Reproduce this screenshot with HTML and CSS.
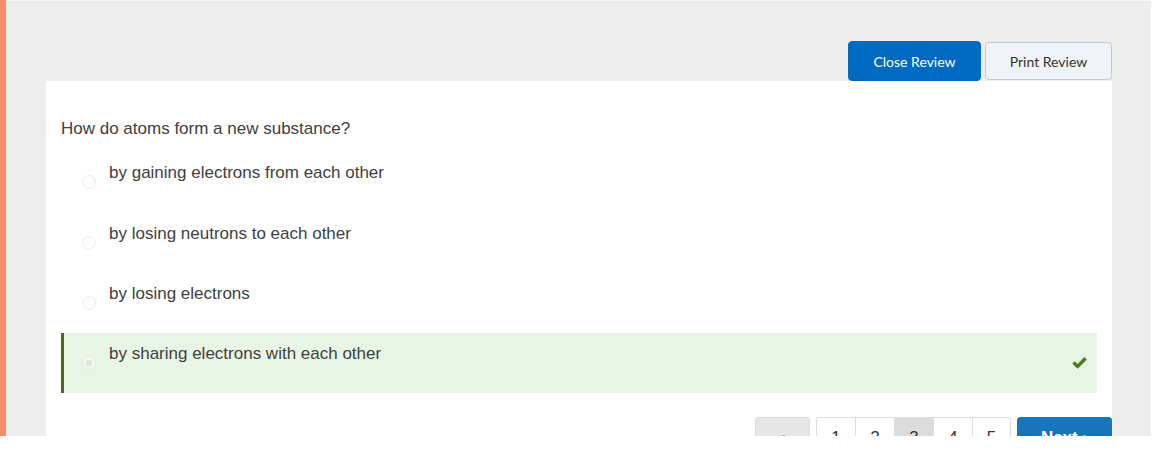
FILE: index.html
```html
<!DOCTYPE html>
<html>
<head>
<meta charset="utf-8">
<link rel="stylesheet" href="styles.css">
</head>
<body>
<div class="viewport">
  <div class="accent"></div>
  <div class="main">
    <div class="toolbar">
      <button class="btn btn-primary">Close Review</button>
      <button class="btn btn-secondary">Print Review</button>
    </div>
    <div class="card">
      <p class="question">How do atoms form a new substance?</p>
      <ul class="options">
        <li class="option"><span class="radio"></span><span class="label">by gaining electrons from each other</span></li>
        <li class="option"><span class="radio"></span><span class="label">by losing neutrons to each other</span></li>
        <li class="option"><span class="radio"></span><span class="label">by losing electrons</span></li>
        <li class="option correct"><span class="radio checked"></span><span class="label">by sharing electrons with each other</span>
          <svg class="check" viewBox="0 0 15 13" width="15" height="13"><path d="M1.5 6.5 L5.6 10.4 L13.6 2.2" fill="none" stroke="#4b7a1e" stroke-width="3.4" stroke-linecap="butt" stroke-linejoin="miter"/></svg>
        </li>
      </ul>
      <div class="pager">
        <button class="pg prev">&#8249;</button>
        <div class="pages">
          <button class="pg num">1</button>
          <button class="pg num">2</button>
          <button class="pg num active">3</button>
          <button class="pg num">4</button>
          <button class="pg num">5</button>
        </div>
        <button class="pg next">Next &#8250;</button>
      </div>
    </div>
  </div>
</div>
</body>
</html>
```
FILE: styles.css
```css
html, body {
  margin: 0;
  padding: 0;
  background: #ffffff;
}
.viewport {
  display: flex;
  width: 1151px;
  height: 436px;
  overflow: hidden;
}
.accent {
  width: 6px;
  flex: none;
  background: #f98c6c;
}
.main {
  flex: 1;
  background: #ededed;
  border-top: 1px solid #f7f7f7;
  padding: 40px 39px 0 40px;
}
.toolbar {
  display: flex;
  justify-content: flex-end;
  align-items: center;
  gap: 4px;
  height: 40px;
}
.btn {
  font-family: Lato, "Liberation Sans", sans-serif;
  font-size: 14px;
  border-radius: 4px;
  cursor: pointer;
  padding: 0;
}
.btn-primary {
  background: #0069c0;
  color: #ffffff;
  border: 1px solid #0069c0;
  width: 133px;
  height: 40px;
}
.btn-secondary {
  background: #f0f3f7;
  color: #333333;
  border: 1px solid #c5c9ce;
  width: 127px;
  height: 38px;
}
.card {
  background: #ffffff;
  padding: 36px 15px 0 15px;
  height: 400px;
}
.question {
  margin: 0;
  font-family: "Liberation Sans", Arial, sans-serif;
  font-size: 17px;
  line-height: 24px;
  color: #404040;
}
.options {
  list-style: none;
  margin: 11px 0 0 0;
  padding: 0;
}
.option {
  display: flex;
  align-items: flex-start;
  height: 60px;
  box-sizing: border-box;
  padding: 9px 10px 0 18px;
  border-left: 3px solid transparent;
  font-family: "Liberation Sans", Arial, sans-serif;
  font-size: 17px;
  line-height: 24px;
  color: #404040;
}
.option:first-child {
  height: 61px;
}
.radio {
  width: 12px;
  height: 12px;
  border: 1px solid #ececec;
  border-radius: 50%;
  margin-top: 14px;
  margin-right: 13px;
  flex: none;
  background: #fdfdfd;
}
.radio.checked {
  background: radial-gradient(circle, #dfe6dc 0 3px, #f2f7ef 3.5px);
  border-color: #e4ebe1;
}
.label {
  flex: 1;
}
.correct {
  background: #e9f5e4;
  border-left-color: #4a6a1a;
}
.check {
  margin-top: 14px;
}
.pager {
  display: flex;
  justify-content: flex-end;
  gap: 6px;
  margin: 24px -15px 0 0;
}
.pg {
  height: 38px;
  font-family: "Liberation Sans", Arial, sans-serif;
  font-size: 17px;
  color: #333333;
  padding: 3px 0 0 0;
  background: #ffffff;
  border: 1px solid #dddddd;
}
.prev {
  width: 55px;
  background: #e6e6e6;
  border-color: #dcdcdc;
  border-radius: 3px;
}
.pages {
  display: flex;
}
.num {
  width: 39px;
  border-right-width: 0;
}
.num:first-child {
  border-radius: 3px 0 0 3px;
}
.num:last-child {
  border-right-width: 1px;
  border-radius: 0 3px 3px 0;
}
.num.active {
  background: #dcdcdc;
}
.next {
  width: 95px;
  background: #1a74b9;
  border-color: #1a74b9;
  color: #ffffff;
  font-weight: bold;
  border-radius: 3px;
}
```
